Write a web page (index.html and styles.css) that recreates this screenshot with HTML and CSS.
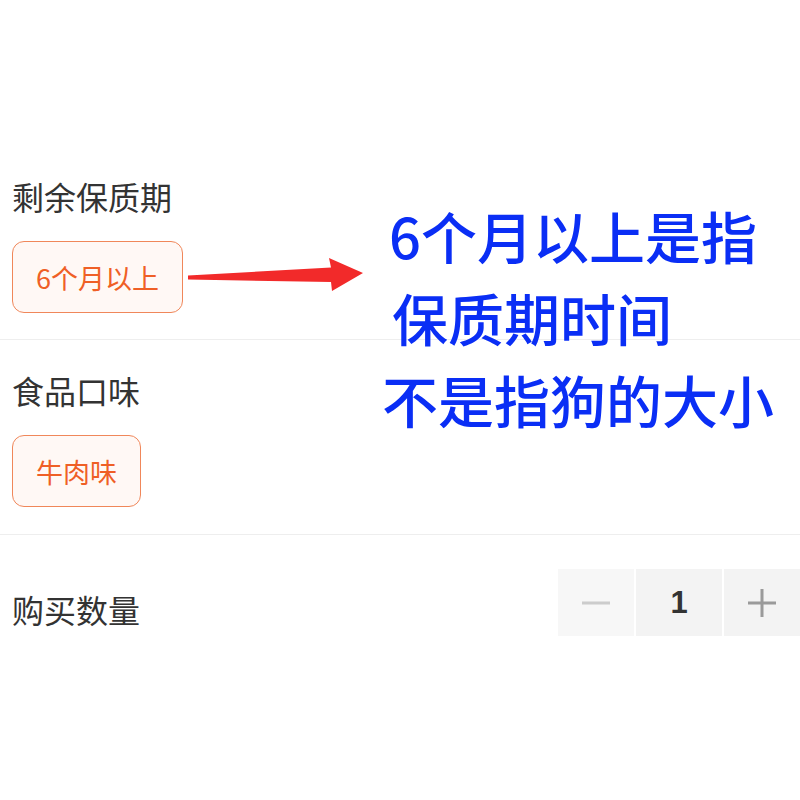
FILE: index.html
```html
<!DOCTYPE html>
<html lang="zh-CN">
  <head>
    <meta charset="UTF-8" />
    <meta name="viewport" content="width=device-width, initial-scale=1.0" />
    <title>商品规格</title>
    <link rel="stylesheet" href="styles.css">
  </head>
  <body>
    <div class="sku">
      <section class="sku-group first">
        <div class="sku-label">剩余保质期</div>
        <div class="sku-options">
          <span class="chip active">6个月以上</span>
        </div>
      </section>

      <section class="sku-group">
        <div class="sku-label">食品口味</div>
        <div class="sku-options">
          <span class="chip active">牛肉味</span>
        </div>
      </section>

      <section class="sku-group qty-row">
        <div class="sku-label">购买数量</div>
        <div class="stepper">
          <span class="step-btn minus">
            <svg width="28" height="28" viewBox="0 0 28 28"><rect x="0" y="12.5" width="28" height="3" /></svg>
          </span>
          <span class="step-value">1</span>
          <span class="step-btn plus">
            <svg width="28" height="28" viewBox="0 0 28 28"><rect x="0" y="12.5" width="28" height="3" /><rect x="12.5" y="0" width="3" height="28" /></svg>
          </span>
        </div>
      </section>

      <!-- annotation on top of the screenshot -->
      <svg class="arrow" width="180" height="40" viewBox="188 256 180 40">
        <polygon points="188,275.5 331,267.5 329,258 363,273 332,291 331,282 188,279.5" />
      </svg>
      <div class="note">
        <div class="note-line l1">6个月以上是指</div>
        <div class="note-line l2">保质期时间</div>
        <div class="note-line l3">不是指狗的大小</div>
      </div>
    </div>
  </body>
</html>
```

FILE: styles.css
```css
body {
  margin: 0;
  background-color: #fff;
  font-family: "Noto Sans CJK SC", "Noto Sans", sans-serif;
}

.sku {
  position: relative;
  width: 800px;
  height: 800px;
  overflow: hidden;
}

.sku-group {
  padding: 28px 12px 27px;
  border-top: 1px solid #eeeeee;
}

.sku-group.first {
  padding-top: 174px;
  padding-bottom: 26px;
  border-top: none;
}

.sku-label {
  font-size: 32px;
  line-height: 44px;
  color: #333;
}

.sku-options {
  display: flex;
  gap: 16px;
  margin-top: 23px;
}

.chip {
  display: inline-flex;
  align-items: center;
  height: 70px;
  padding: 0 23px;
  border: 1px solid #f0875a;
  border-radius: 12px;
  background-color: #fff8f5;
  color: #ef5f26;
  font-size: 27px;
}

.qty-row {
  display: flex;
  justify-content: space-between;
  align-items: center;
  padding: 34px 0 0 12px;
}

.qty-row .sku-label {
  margin-top: 12px;
}

.stepper {
  display: flex;
  gap: 2px;
  height: 67px;
}

.step-btn,
.step-value {
  display: flex;
  align-items: center;
  justify-content: center;
  background-color: #f3f3f3;
}

.step-btn {
  width: 76px;
}

.step-btn.minus {
  background-color: #f7f7f7;
}

.step-btn.minus svg {
  fill: #cccccc;
}

.step-btn.plus svg {
  fill: #9a9a9a;
}

.step-value {
  width: 86px;
  font-family: "Liberation Sans", Arial, sans-serif;
  font-size: 31px;
  font-weight: bold;
  color: #333;
}

.arrow {
  position: absolute;
  left: 188px;
  top: 256px;
  fill: #f22a2a;
}

.note {
  position: absolute;
  left: 382px;
  top: 194px;
  color: #0a2ef5;
  font-size: 56px;
  font-weight: 500;
  line-height: 82px;
  white-space: nowrap;
}

.note-line.l1 {
  padding-left: 7px;
}

.note-line.l2 {
  padding-left: 10px;
}
```
